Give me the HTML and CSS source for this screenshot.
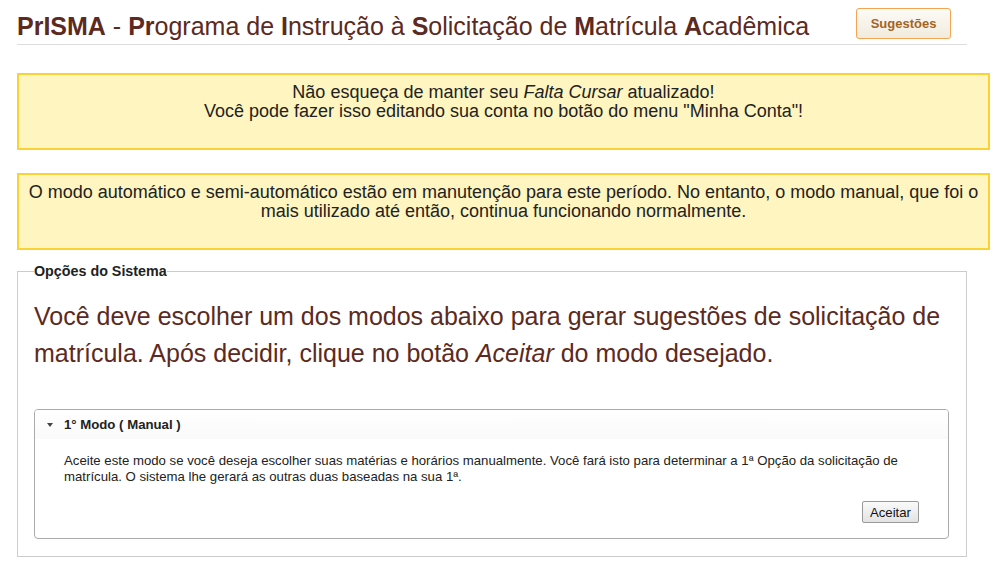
FILE: index.html
```html
<!DOCTYPE html>
<html lang="pt-BR">
<head>
<meta charset="utf-8">
<title>PrISMA</title>
<link rel="stylesheet" href="styles.css">
</head>
<body>
<div class="page">
  <header class="top">
    <h1 class="title"><b>PrISMA</b> - <b>Pr</b>ograma de <b>I</b>nstrução à <b>S</b>olicitação de <b>M</b>atrícula <b>A</b>cadêmica</h1>
    <button class="btn-sug">Sugestões</button>
  </header>

  <div class="notice">Não esqueça de manter seu <i>Falta Cursar</i> atualizado!<br>Você pode fazer isso editando sua conta no botão do menu "Minha Conta"!</div>

  <div class="notice">O modo automático e semi-automático estão em manutenção para este período. No entanto, o modo manual, que foi o mais utilizado até então, continua funcionando normalmente.</div>

  <fieldset class="options">
    <legend>Opções do Sistema</legend>
    <p class="lead">Você deve escolher um dos modos abaixo para gerar sugestões de solicitação de matrícula. Após decidir, clique no botão <i>Aceitar</i> do modo desejado.</p>
    <div class="panel">
      <div class="panel-head"><span class="tri"></span>1° Modo ( Manual )</div>
      <div class="panel-body">
        <p>Aceite este modo se você deseja escolher suas matérias e horários manualmente. Você fará isto para determinar a 1ª Opção da solicitação de matrícula. O sistema lhe gerará as outras duas baseadas na sua 1ª.</p>
        <div class="actions"><button class="btn-ok">Aceitar</button></div>
      </div>
    </div>
  </fieldset>
</div>
</body>
</html>
```
FILE: styles.css
```css
html, body { margin: 0; padding: 0; background: #fff; }
body { font-family: "Liberation Sans", Arial, sans-serif; color: #222; }
.page { padding: 0 14px 0 17px; }

.top {
  width: 950px;
  display: flex;
  justify-content: space-between;
  align-items: flex-start;
  border-bottom: 1px solid #ddd;
  height: 45px;
  box-sizing: border-box;
}
.title {
  margin: 10px 0 0 0;
  font-size: 25px;
  font-weight: normal;
  line-height: 32px;
  color: #5c2a1e;
  white-space: nowrap;
}
.title b { font-weight: bold; }
.btn-sug {
  margin: 8px 16px 0 0;
  width: 95px;
  height: 31px;
  border: 1px solid #f4a453;
  border-radius: 3px;
  background: linear-gradient(#fdfbf7, #f2ebdd);
  color: #a5641d;
  font-family: "Liberation Sans", Arial, sans-serif;
  font-weight: bold;
  font-size: 13px;
  padding: 0;
}

.notice {
  width: 973px;
  box-sizing: border-box;
  margin-top: 28px;
  border: 2px solid #fbd233;
  background: #fef5c0;
  text-align: center;
  font-size: 18px;
  line-height: 19px;
  padding: 8px 8px 27px;
  color: #222;
}
.notice + .notice { margin-top: 23px; }

.options {
  width: 950px;
  box-sizing: border-box;
  margin: 13px 0 0 0;
  padding: 0 17px 17px 16px;
  border: 1px solid #ccc;
}
.options legend {
  font-size: 14.3px;
  font-weight: bold;
  color: #222;
  padding: 0;
  margin-left: 0;
}
.lead {
  margin: 19px 0 37px 0;
  font-size: 25px;
  line-height: 37px;
  color: #5c2a1e;
}
.panel {
  border: 1px solid #aaa;
  border-radius: 4px;
  overflow: hidden;
}
.panel-head {
  height: 29px;
  display: flex;
  align-items: center;
  padding-left: 12px;
  font-size: 13.2px;
  font-weight: bold;
  color: #222;
  background: linear-gradient(#fff, #fafafa);
}
.tri {
  width: 0; height: 0;
  border-left: 3.5px solid transparent;
  border-right: 3.5px solid transparent;
  border-top: 4px solid #444;
  margin-right: 11px;
}
.panel-body { padding: 14px 29px 15px 29px; }
.panel-body p {
  margin: 0;
  font-size: 13.2px;
  line-height: 16px;
  color: #222;
}
.actions { display: flex; justify-content: flex-end; margin-top: 16px; }
.btn-ok {
  height: 22px;
  padding: 0 7px;
  font-family: "Liberation Sans", Arial, sans-serif;
  font-size: 13.2px;
  color: #111;
  border: 1px solid #999;
  border-radius: 2px;
  background: linear-gradient(#fafafa, #e3e3e3);
}
```
